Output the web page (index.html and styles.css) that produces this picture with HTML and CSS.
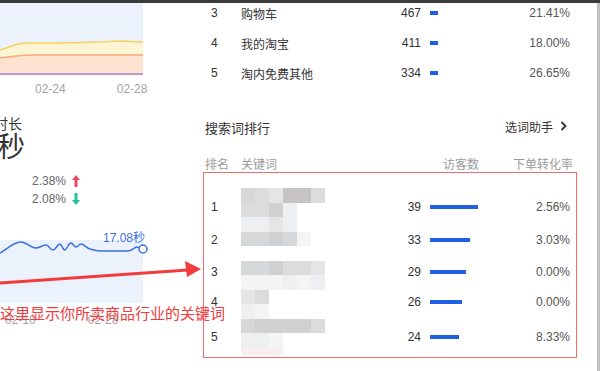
FILE: index.html
```html
<!DOCTYPE html>
<html lang="zh-CN">
<head>
<meta charset="utf-8">
<title>搜索词排行</title>
<link rel="stylesheet" href="styles.css">
</head>
<body>
<div class="page">
  <div class="topbar"></div>
  <div class="main">
    <div class="left">
      <svg class="chart1" width="150" height="72" viewBox="0 0 150 72">
        <rect x="0" y="0" width="143" height="72" fill="#ebf2fc"/>
        <path d="M0 47 C10 44 17 40 25 40 L60 40 L100 39 L120 38 L143 39 L143 52 L30 52 C20 52 10 54 0 55 Z" fill="#fcf4d3"/>
        <path d="M0 55 C10 54 20 52 30 52 L143 52 L143 71 L0 71 Z" fill="#fde2d0"/>
        <path d="M0 47 C10 44 17 40 25 40 L60 40 L100 39 L120 38 L143 39" fill="none" stroke="#f4d35e" stroke-width="1.5"/>
        <path d="M0 55 C10 54 20 52 30 52 L143 52" fill="none" stroke="#f7a877" stroke-width="1.5"/>
        <path d="M0 71 H143" stroke="#a982c9" stroke-width="1.5"/>
      </svg>
      <div class="axis axis1"><span>02-24</span><span>02-28</span></div>
      <div class="metric-label">时长</div>
      <div class="metric-value">秒</div>
      <div class="change">2.38%<svg class="arr" width="8" height="12" viewBox="0 0 8 12"><polygon points="4,0 8,5 5.5,5 5.5,12 2.5,12 2.5,5 0,5" fill="#f04864"/></svg></div>
      <div class="change">2.08%<svg class="arr" width="8" height="12" viewBox="0 0 8 12"><polygon points="4,12 8,7 5.5,7 5.5,0 2.5,0 2.5,7 0,7" fill="#20c29a"/></svg></div>
      <svg class="chart2" width="150" height="77" viewBox="0 0 150 77">
        <rect x="0" y="12" width="143" height="63" fill="#ebf2fc"/>
        <path d="M0 25 C6 22 12 15 20 14 C26 13 30 20 36 20 C40 20 42 17 46 17 C49 17 50 22 53 22 C56 22 57 16 60 16 C62 16 62 22 65 22 C67 22 68 15 71 15 C73 15 74 19 76 19 C78 19 79 16 81 16 C84 16 86 20 90 21 C94 22 97 23 102 23 L128 23 C132 23 134 19 137 19 C139 19 140 21 143 21" fill="none" stroke="#3b6fe2" stroke-width="1.5" stroke-linejoin="round"/>
        <text x="103" y="14" font-size="12" fill="#3b6fe2" font-family="Liberation Sans, Noto Sans CJK SC, sans-serif">17.08秒</text>
        <circle cx="143" cy="21" r="4" fill="#fff" stroke="#3b6fe2" stroke-width="1.5"/>
      </svg>
      <div class="axis axis2"><span>02-10</span><span>02-28</span></div>
    </div>
    <div class="right">
      <div class="src-list">
        <div class="row src-row"><span class="rank">3</span><span class="name">购物车</span><span class="num">467</span><span></span><span class="barcell"><i class="bar" style="width:8px"></i></span><span class="pct">21.41%</span></div>
        <div class="row src-row"><span class="rank">4</span><span class="name">我的淘宝</span><span class="num">411</span><span></span><span class="barcell"><i class="bar" style="width:8px"></i></span><span class="pct">18.00%</span></div>
        <div class="row src-row"><span class="rank">5</span><span class="name">淘内免费其他</span><span class="num">334</span><span></span><span class="barcell"><i class="bar" style="width:8px"></i></span><span class="pct">26.65%</span></div>
      </div>
      <div class="sec-head">
        <span class="sec-title">搜索词排行</span>
        <span class="helper">选词助手<svg class="chev" width="7" height="10" viewBox="0 0 7 10"><polyline points="1.5,1 5.5,5 1.5,9" fill="none" stroke="#333" stroke-width="1.8"/></svg></span>
      </div>
      <div class="kw-head">
        <span class="h-rank">排名</span>
        <span class="h-kw">关键词</span>
        <span class="h-vis">访客数</span>
        <span class="h-conv">下单转化率</span>
      </div>
      <div class="kw-list">
        <div class="row kw-row"><span class="rank">1</span><span class="name"></span><span class="num">39</span><span></span><span class="barcell"><i class="bar" style="width:48px"></i></span><span class="pct">2.56%</span></div>
        <div class="row kw-row r2"><span class="rank">2</span><span class="name"></span><span class="num">33</span><span></span><span class="barcell"><i class="bar" style="width:40px"></i></span><span class="pct">3.03%</span></div>
        <div class="row kw-row r3"><span class="rank">3</span><span class="name"></span><span class="num">29</span><span></span><span class="barcell"><i class="bar" style="width:36px"></i></span><span class="pct">0.00%</span></div>
        <div class="row kw-row r4"><span class="rank">4</span><span class="name"></span><span class="num">26</span><span></span><span class="barcell"><i class="bar" style="width:32px"></i></span><span class="pct">0.00%</span></div>
        <div class="row kw-row r5"><span class="rank">5</span><span class="name"></span><span class="num">24</span><span></span><span class="barcell"><i class="bar" style="width:29px"></i></span><span class="pct">8.33%</span></div>
      </div>
    </div>
    <div class="scroll"></div>
  </div>

  <div class="mosaic">
    <i class="s3"></i><i class="s4"></i><i class="s5"></i><i class="s1"></i><i class="s1"></i><i class="s4"></i>
    <i class="s4"></i><i class="s4"></i><i class="s2"></i><i class="s6"></i><i></i><i></i>
    <i class="s6"></i><i class="s6"></i><i class="s5"></i><i class="s6"></i><i></i><i></i>
    <i class="s3"></i><i class="s3"></i><i class="s2"></i><i class="s3"></i><i class="s7"></i><i></i>
    <i></i><i></i><i></i><i></i><i></i><i></i>
    <i class="s3"></i><i class="s3"></i><i class="s2"></i><i class="s4"></i><i class="s4"></i><i class="s5"></i>
    <i class="s7"></i><i class="s7"></i><i class="s7"></i><i class="s6"></i><i class="s7"></i><i class="s6"></i>
    <i class="s5"></i><i class="s4"></i><i></i><i></i><i></i><i></i>
    <i class="s6"></i><i class="s7"></i><i></i><i></i><i></i><i></i>
    <i class="s3"></i><i class="s2"></i><i class="s2"></i><i class="s2"></i><i class="s2"></i><i class="s4"></i>
    <i class="s6"></i><i class="s6"></i><i class="s7"></i><i></i><i></i><i></i>
    <i class="p"></i><i class="p"></i><i class="p"></i><i></i><i></i><i></i>
  </div>

  <div class="redbox"></div>
  <svg class="arrow" width="205" height="35" viewBox="0 0 205 35">
    <line x1="0" y1="28" x2="188" y2="15" stroke="#f23c3c" stroke-width="3"/>
    <polygon points="185,6 201,14 187,22" fill="#f23c3c"/>
  </svg>
  <div class="note">这里显示你所卖商品行业的关键词</div>
</div>
</body>
</html>
```

FILE: styles.css
```css
* { box-sizing: border-box; }
html, body { margin: 0; padding: 0; background: #fff; }
body {
  font-family: "Liberation Sans", "Noto Sans CJK SC", sans-serif;
  color: #333;
  font-size: 12px;
}
.page {
  position: relative;
  width: 600px;
  height: 371px;
  overflow: hidden;
}
.topbar {
  height: 3px;
  background: #3c3c3c;
}
.main {
  display: flex;
  height: 368px;
}
.left {
  width: 150px;
  flex-shrink: 0;
  overflow: hidden;
}
.chart1, .chart2 { display: block; }
.axis {
  display: flex;
  gap: 51px;
  height: 16px;
  line-height: 16px;
  font-size: 12px;
  color: #a3a3a3;
}
.axis1 { margin-top: 6px; padding-left: 35px; }
.axis2 { margin-top: 7px; padding-left: 5px; gap: 52px; }
.metric-label {
  margin-top: 18px;
  margin-left: -6px;
  font-size: 14px;
  line-height: 18px;
  height: 18px;
  color: #333;
}
.metric-value {
  margin-left: -3px;
  font-size: 28px;
  line-height: 30px;
  height: 30px;
  color: #333;
}
.metric-value + .change { margin-top: 9px; }
.change {
  display: flex;
  align-items: center;
  height: 18px;
  padding-left: 32px;
  color: #666;
  font-size: 12px;
}
.change .arr { margin-left: 6px; }
.chart2 { margin-top: 20px; }

.right {
  width: 397px;
  margin-left: 50px;
  padding: 0 27px 0 5px;
  overflow: hidden;
}
.scroll {
  width: 3px;
  background: #c2c2c2;
}
.src-list { margin-top: -5px; }
.row {
  display: grid;
  grid-template-columns: 36px 140px 40px 9px 70px 70px;
  align-items: center;
  font-size: 12px;
}
.src-row { height: 30px; }
.kw-row { height: 32px; }
.kw-row.r2 { height: 34px; }
.kw-row.r3, .kw-row.r4 { height: 30px; }
.kw-row.r5 { height: 36px; padding-top: 4px; }
.rank { padding-left: 6px; color: #333; }
.name { color: #333; }
.num { text-align: right; color: #333; }
.barcell { display: flex; align-items: center; }
.bar {
  display: block;
  height: 4px;
  background: #1f5fe4;
}
.pct { text-align: right; color: #555; }

.sec-head {
  margin-top: 29px;
  height: 20px;
  display: flex;
  align-items: center;
  justify-content: space-between;
  padding-right: 3px;
}
.sec-title { font-size: 13px; color: #333; }
.helper {
  display: flex;
  align-items: center;
  gap: 7px;
  font-size: 12px;
  color: #333;
  margin-top: -2px;
}
.kw-head {
  margin-top: 17px;
  height: 18px;
  display: flex;
  align-items: center;
  font-size: 12px;
  color: #9b9b9b;
}
.h-rank { width: 36px; }
.h-kw { flex: 1; }
.h-conv { margin-left: 34px; margin-right: -3px; }
.kw-list { margin-top: 19px; }

.mosaic {
  position: absolute;
  left: 241px;
  top: 188px;
  display: grid;
  grid-template-columns: repeat(6, 14px);
  grid-template-rows: repeat(11, 14.5px) 7px;
}
.mosaic i { display: block; }
.s1 { background: #c5c3c6; }
.s2 { background: #cfd0d2; }
.s3 { background: #d6d7d8; }
.s4 { background: #dcdcdd; }
.s5 { background: #e5e5e7; }
.s6 { background: #eeeff1; }
.s7 { background: #f4f4f5; }
.p { background: #f9eeee; }

.redbox {
  position: absolute;
  left: 203px;
  top: 172px;
  width: 374px;
  height: 186px;
  border: 1px solid #f36b6b;
}
.arrow {
  position: absolute;
  left: 0;
  top: 255px;
}
.note {
  position: absolute;
  left: 0;
  top: 304px;
  font-size: 15px;
  line-height: 18px;
  color: #f2393b;
  font-family: "Noto Sans CJK SC", sans-serif;
  white-space: nowrap;
}
```
